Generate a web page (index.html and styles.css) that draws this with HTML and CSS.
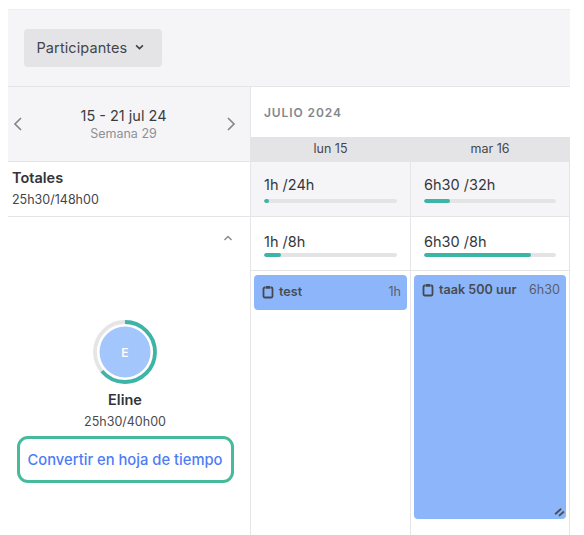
FILE: index.html
```html
<!DOCTYPE html>
<html lang="es">
<head>
<meta charset="utf-8">
<title>Planificación</title>
<link rel="stylesheet" href="styles.css">
</head>
<body>
<div class="app">
  <header class="toolbar">
    <button class="filter">Participantes
      <svg class="caret" viewBox="0 0 10 6" width="9" height="6"><path d="M1.2 1.2 5 4.8l3.8-3.6" fill="none" stroke="#3f4047" stroke-width="1.7"/></svg>
    </button>
  </header>
  <div class="grid">
    <div class="weeknav">
      <svg class="nav" viewBox="0 0 10 16" width="10" height="16"><path d="M8 2 2 8l6 6" fill="none" stroke="#85878e" stroke-width="1.7"/></svg>
      <div class="week"><div class="range">15 - 21 jul 24</div><div class="num">Semana 29</div></div>
      <svg class="nav" viewBox="0 0 10 16" width="10" height="16"><path d="m2 2 6 6-6 6" fill="none" stroke="#85878e" stroke-width="1.7"/></svg>
    </div>
    <div class="calhead">
      <div class="month">JULIO 2024</div>
      <div class="days"><div class="day">lun 15</div><div class="day">mar 16</div></div>
    </div>

    <div class="totals">
      <div class="t-title">Totales</div>
      <div class="t-sub">25h30/148h00</div>
    </div>
    <div class="cell shaded">
      <div class="hours">1h /24h</div>
      <div class="bar"><span class="fill" style="width:4%"></span></div>
    </div>
    <div class="cell shaded">
      <div class="hours">6h30 /32h</div>
      <div class="bar"><span class="fill" style="width:20%"></span></div>
    </div>

    <div class="person">
      <svg class="collapse" viewBox="0 0 10 6" width="10" height="6"><path d="M1.5 5 5 1.5 8.500 5" fill="none" stroke="#8b8d94" stroke-width="1.500"/></svg>
      <svg class="ring" viewBox="0 0 64 64" width="64" height="64">
        <circle cx="32" cy="32" r="30" fill="none" stroke="#e5e5e7" stroke-width="3.800"/>
        <circle cx="32" cy="32" r="30" fill="none" stroke="#3db5a6" stroke-width="3.800" pathLength="100" stroke-dasharray="64 36" transform="rotate(-90 32 32)"/>
        <circle cx="32" cy="32" r="25.500" fill="#a3c6fd"/>
        <text x="32" y="36.500" text-anchor="middle" class="initial">E</text>
      </svg>
      <div class="name">Eline</div>
      <div class="p-hours">25h30/40h00</div>
      <a class="convert">Convertir en hoja de tiempo</a>
    </div>
    <div class="daycol">
      <div class="cell top">
        <div class="hours">1h /8h</div>
        <div class="bar"><span class="fill" style="width:13%"></span></div>
      </div>
      <div class="events first">
        <div class="event short">
          <div class="ev-row">
            <svg class="clip" viewBox="0 0 12 14" width="12" height="14"><path d="M3.500 2.500H2.700A1.200 1.200 0 0 0 1.500 3.700v7.600a1.200 1.200 0 0 0 1.200 1.200h6.600a1.200 1.200 0 0 0 1.200-1.200V3.700a1.200 1.200 0 0 0-1.200-1.200H8.500" fill="none" stroke="#45494f" stroke-width="1.800"/><rect x="3.800" y="1" width="4.400" height="2.800" rx=".6" fill="#45494f"/></svg>
            <span class="ev-name">test</span><span class="ev-time">1h</span>
          </div>
        </div>
      </div>
    </div>
    <div class="daycol">
      <div class="cell top">
        <div class="hours">6h30 /8h</div>
        <div class="bar"><span class="fill" style="width:81%"></span></div>
      </div>
      <div class="events">
        <div class="event tall">
          <div class="ev-row">
            <svg class="clip" viewBox="0 0 12 14" width="12" height="14"><path d="M3.500 2.500H2.700A1.200 1.200 0 0 0 1.500 3.700v7.600a1.200 1.200 0 0 0 1.200 1.200h6.600a1.200 1.200 0 0 0 1.200-1.200V3.700a1.200 1.200 0 0 0-1.200-1.200H8.500" fill="none" stroke="#45494f" stroke-width="1.800"/><rect x="3.800" y="1" width="4.400" height="2.800" rx=".6" fill="#45494f"/></svg>
            <span class="ev-name">taak 500 uur</span><span class="ev-time">6h30</span>
          </div>
          <svg class="grip" viewBox="0 0 10 9" width="11" height="10"><path d="M1 6.500 6.500 1.500M4.500 8 9 4" fill="none" stroke="#4a4f58" stroke-width="1.700"/></svg>
        </div>
      </div>
    </div>
  </div>
</div>
</body>
</html>
```
FILE: styles.css
```css
* { box-sizing: border-box; }
html, body { height: 100%; }
body {
  margin: 0;
  padding: 9px 14px 0 8px;
  height: 535px;
  overflow: hidden;
  background: #fff;
  font-family: Inter, "Liberation Sans", sans-serif;
  color: #2f3036;
}
.app { display: flex; flex-direction: column; height: 100%; }
.toolbar {
  height: 78px;
  flex: none;
  background: #f5f5f7;
  border-top: 1px solid #eeeef0;
  border-bottom: 1px solid #e5e5e7;
  padding: 19px 16px 0;
}
.filter {
  display: flex;
  align-items: center;
  gap: 8px;
  width: 138px;
  height: 38px;
  padding: 0 0 2px 12.500px;
  border: 0;
  border-radius: 4px;
  background: #e4e4e6;
  font: 400 14.500px Inter, "Liberation Sans", sans-serif;
  letter-spacing: .1px;
  color: #44454c;
}
.grid {
  flex: 1;
  display: grid;
  grid-template-columns: 243px 160px 159px;
  grid-template-rows: 75px 55px 1fr;
}
.weeknav {
  display: flex;
  align-items: center;
  justify-content: space-between;
  padding: 0 14px 0 5px;
  background: #f5f5f7;
  border-right: 1px solid #e5e5e7;
  border-bottom: 1px solid #e5e5e7;
}
.week { text-align: center; padding: 0 2px 0 0; }
.range { font-size: 14.500px; line-height: 18px; color: #3a3b41; }
.num { margin-top: 1px; font-size: 12.500px; line-height: 16px; color: #8f9096; }
.calhead { grid-column: 2 / 4; display: flex; flex-direction: column; border-bottom: 1px solid #e5e5e7; }
.month {
  height: 50px;
  padding: 19px 0 0 13px;
  font-size: 12px;
  font-weight: 600;
  letter-spacing: .9px;
  line-height: 14px;
  color: #85868c;
}
.days { display: grid; grid-template-columns: 160px 159px; background: #e4e4e6; height: 24px; }
.day { text-align: center; font-size: 12.500px; line-height: 24px; color: #45464c; padding-right: 1px; }
.totals {
  padding: 7px 0 0 4px;
  border-right: 1px solid #e5e5e7;
  border-bottom: 1px solid #e5e5e7;
}
.t-title { font-size: 14.500px; font-weight: 600; line-height: 17px; color: #33343a; }
.t-sub { font-size: 12.500px; line-height: 16px; margin-top: 6px; color: #44454b; }
.cell {
  padding: 14px 13px 0 13px;
  border-right: 1px solid #e5e5e7;
  border-bottom: 1px solid #e5e5e7;
}
.cell.shaded { background: #f5f5f7; }
.cell.top { height: 54px; padding-top: 16px; }
.cell.top .bar { margin-top: 3px; }
.hours { font-size: 14.500px; line-height: 17px; color: #35363c; }
.bar { height: 4px; margin-top: 6px; border-radius: 2px; background: #e4e4e6; overflow: hidden; }
.fill { display: block; height: 100%; border-radius: 2px; background: #3db5a6; }
.person {
  position: relative;
  display: flex;
  flex-direction: column;
  align-items: center;
  padding: 103px 8px 0 0;
  border-right: 1px solid #e5e5e7;
}
.collapse { position: absolute; top: 18px; right: 17px; }
.ring { display: block; }
.initial { font: 600 12px Inter, "Liberation Sans", sans-serif; fill: #fff; }
.name { margin-top: 6px; font-size: 14.500px; font-weight: 600; line-height: 20px; color: #33343a; }
.p-hours { margin-top: 3px; font-size: 12.500px; line-height: 18px; color: #4a4b51; }
.convert {
  flex: none;
  margin-top: 5px;
  width: 217px;
  height: 47px;
  border: 3px solid #45bb9b;
  border-radius: 11px;
  text-align: center;
  font-size: 14.750px;
  font-weight: 500;
  line-height: 42px;
  color: #4d7cf6;
  white-space: nowrap;
}
.daycol { display: flex; flex-direction: column; border-right: 1px solid #e5e5e7; }
.daycol .cell { border-right: 0; }
.events { padding: 4px 3px 0 3px; }
.event { position: relative; border-radius: 4px; background: #8db6fa; padding: 0 6px 0 8px; }
.short { height: 35px; padding-top: 10px; }
.tall { height: 244px; padding-top: 8px; }
.ev-row { display: flex; align-items: center; font-size: 12.600px; line-height: 14px; }
.clip { flex: none; margin-right: 5px; }
.ev-name { font-weight: 600; color: #474b53; position: relative; }
.ev-time { margin-left: auto; color: #595e69; }
.grip { position: absolute; right: 1px; bottom: 2px; }
```
